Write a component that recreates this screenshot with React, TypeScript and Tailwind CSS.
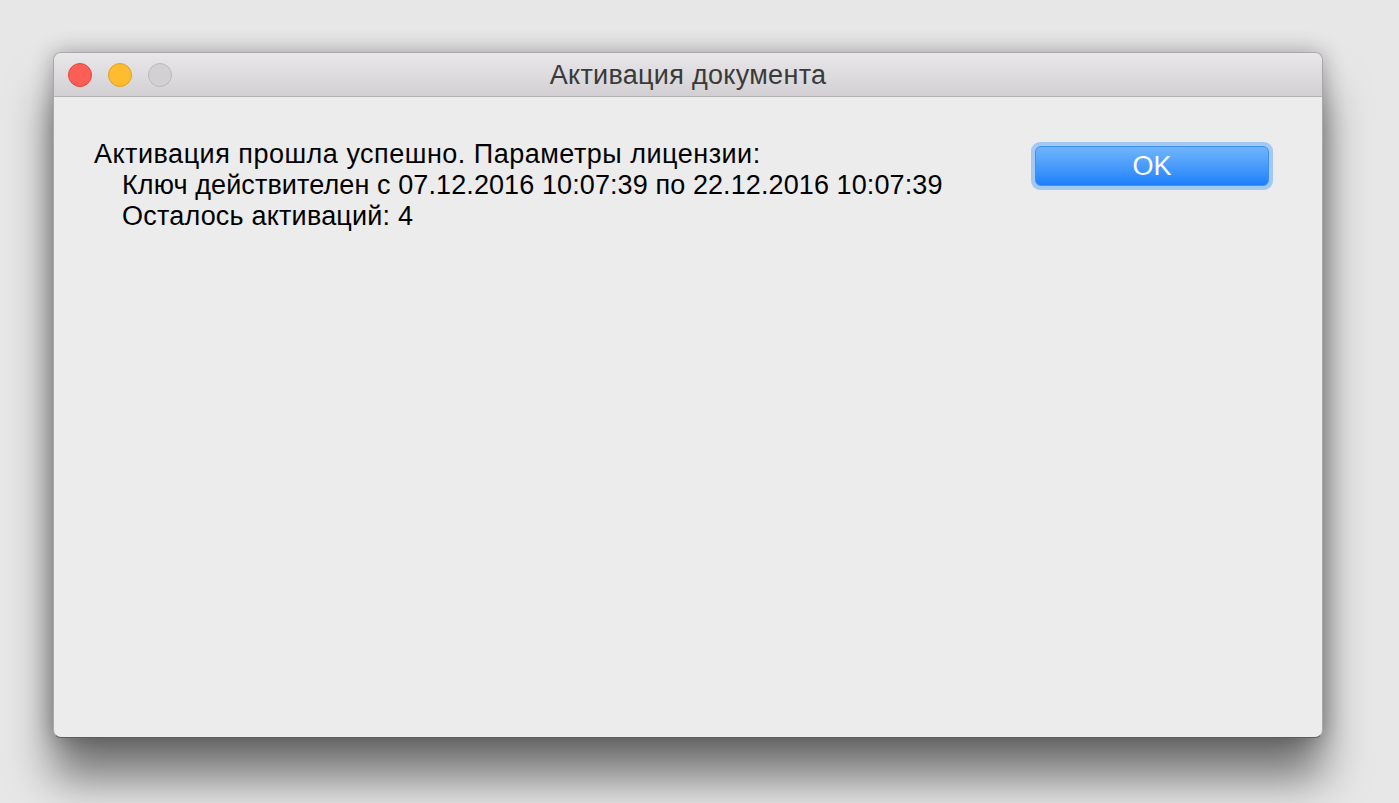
export default function App() {
  const font = { fontFamily: '"Liberation Sans", Arial, sans-serif' };

  return (
    <div className="w-[1399px] h-[803px] bg-[#e7e7e7] overflow-hidden pl-[53px] pt-[52px]" style={font}>
      {/* Window */}
      <div className="w-[1270px] h-[686px] flex flex-col rounded-[8px] bg-[#ececec] border border-[#a9a9a9] border-b-[#5e5e5e] shadow-[0_40px_45px_rgba(0,0,0,0.5),0_0_22px_rgba(0,0,0,0.3)] overflow-hidden">
        {/* Title bar */}
        <div className="relative h-[44px] shrink-0 flex items-center justify-center bg-gradient-to-b from-[#e9e7e9] to-[#d2d0d2] border-b border-[#b1b1b1]">
          <div className="absolute left-[14px] top-[10px] flex gap-[16px]">
            <span className="w-[24px] h-[24px] rounded-full bg-[#fd5f57] border border-[#e2463f]" />
            <span className="w-[24px] h-[24px] rounded-full bg-[#febc2e] border border-[#e1a125]" />
            <span className="w-[24px] h-[24px] rounded-full bg-[#d2d0d2] border border-[#bcbabc]" />
          </div>
          <span className="text-[27px] tracking-[0.3px] text-[#3a3a3a] leading-none pt-[2px]">Активация документа</span>
        </div>

        {/* Body */}
        <div className="flex justify-between pl-[40px] pr-[49px] pt-[42px]">
          <div className="text-[27px] leading-[31px] text-black">
            <div className="tracking-[0.5px]">Активация прошла успешно. Параметры лицензии:</div>
            <div className="pl-[28px] tracking-[0.1px]">Ключ действителен с 07.12.2016 10:07:39 по 22.12.2016 10:07:39</div>
            <div className="pl-[28px] tracking-[0.2px]">Осталось активаций: 4</div>
          </div>
          <div className="mt-[3px] p-[4px] rounded-[9px] bg-[#a3c8f2] h-fit">
            <button className="w-[234px] h-[40px] rounded-[6px] bg-gradient-to-b from-[#6fb5fb] to-[#1a80fb] border border-[#3f8ff0] text-white text-[27px] leading-none flex items-center justify-center">
              OK
            </button>
          </div>
        </div>
      </div>
    </div>
  );
}
